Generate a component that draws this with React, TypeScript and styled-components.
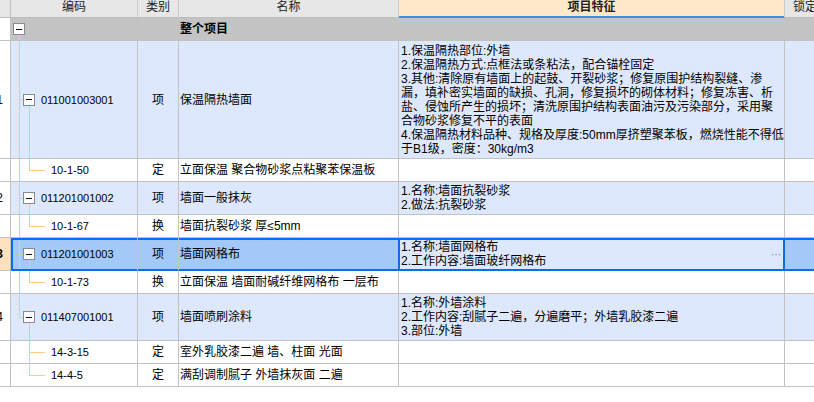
import React from 'react';
import styled, {createGlobalStyle, css} from 'styled-components';

type Tone = 'root' | 'item' | 'plain' | 'sel';
type Kind = 'root' | 'item' | 'quota';
type Rail = 'full' | 'top' | 'bottom' | 'none';

type RowData = {
  kind: Kind;
  no?: string;
  code: string;
  type: string;
  name: string;
  feature: string[];
  h: number;
  main: Rail;
  sub: Rail;
  selected?: boolean;
};

const GRID = '#c2c2c2';
const TREE = '#ffc983';
const SEL = '#0b6cf0';
const COLS = '11px 127px 41px 220px 386px 41px';

const toneBg: Record<Tone, string> = {
  root: '#c4c4c4',
  item: '#dde8fc',
  plain: '#ffffff',
  sel: '#a3c9f9',
};

const rows: RowData[] = [
  {kind: 'root', code: '', type: '', name: '整个项目', feature: [], h: 22, main: 'bottom', sub: 'none'},
  {
    kind: 'item',
    no: '1',
    code: '011001003001',
    type: '项',
    name: '保温隔热墙面',
    feature: [
      '1.保温隔热部位:外墙',
      '2.保温隔热方式:点框法或条粘法，配合锚栓固定',
      '3.其他:清除原有墙面上的起鼓、开裂砂浆；修复原围护结构裂缝、渗',
      '漏，填补密实墙面的缺损、孔洞，修复损坏的砌体材料；修复冻害、析',
      '盐、侵蚀所产生的损坏；清洗原围护结构表面油污及污染部分，采用聚',
      '合物砂浆修复不平的表面',
      '4.保温隔热材料品种、规格及厚度:50mm厚挤塑聚苯板，燃烧性能不得低',
      '于B1级，密度：30kg/m3',
    ],
    h: 117,
    main: 'full',
    sub: 'bottom',
  },
  {kind: 'quota', code: '10-1-50', type: '定', name: '立面保温 聚合物砂浆点粘聚苯保温板', feature: [], h: 22, main: 'full', sub: 'top'},
  {
    kind: 'item',
    no: '2',
    code: '011201001002',
    type: '项',
    name: '墙面一般抹灰',
    feature: ['1.名称:墙面抗裂砂浆', '2.做法:抗裂砂浆'],
    h: 32,
    main: 'full',
    sub: 'bottom',
  },
  {kind: 'quota', code: '10-1-67', type: '换', name: '墙面抗裂砂浆 厚≤5mm', feature: [], h: 22, main: 'full', sub: 'top'},
  {
    kind: 'item',
    no: '3',
    code: '011201001003',
    type: '项',
    name: '墙面网格布',
    feature: ['1.名称:墙面网格布', '2.工作内容:墙面玻纤网格布'],
    h: 32,
    main: 'full',
    sub: 'bottom',
    selected: true,
  },
  {kind: 'quota', code: '10-1-73', type: '换', name: '立面保温 墙面耐碱纤维网格布 一层布', feature: [], h: 22, main: 'full', sub: 'top'},
  {
    kind: 'item',
    no: '4',
    code: '011407001001',
    type: '项',
    name: '墙面喷刷涂料',
    feature: ['1.名称:外墙涂料', '2.工作内容:刮腻子二遍，分遍磨平；外墙乳胶漆二遍', '3.部位:外墙'],
    h: 46,
    main: 'top',
    sub: 'bottom',
  },
  {kind: 'quota', code: '14-3-15', type: '定', name: '室外乳胶漆二遍 墙、柱面 光面', feature: [], h: 22, main: 'none', sub: 'full'},
  {kind: 'quota', code: '14-4-5', type: '定', name: '满刮调制腻子 外墙抹灰面 二遍', feature: [], h: 22, main: 'none', sub: 'top'},
];

type Seg = [string, string, string, string];

const railSeg = (x: number, r: Rail): Seg | null => {
  if (r === 'full') return [`${x}px`, '0', '1px', '100%'];
  if (r === 'top') return [`${x}px`, '0', '1px', '50%'];
  if (r === 'bottom') return [`${x}px`, '100%', '1px', '50%'];
  return null;
};

// connector lines of the tree, drawn as background layers of the code cell
const treeSegs = (kind: Kind, main: Rail, sub: Rail): Seg[] => {
  const segs: (Seg | null)[] = [railSeg(8, main), railSeg(18, sub)];
  if (kind === 'item') segs.push(['8px', '50%', '4px', '1px']);
  if (kind === 'quota') segs.push(['18px', '50%', '16px', '1px']);
  return segs.filter((s): s is Seg => s !== null);
};

const GlobalStyle = createGlobalStyle`
  body {
    margin: 0;
    background: #fff;
  }
  * {
    box-sizing: border-box;
  }
`;

const Sheet = styled.div`
  width: 814px;
  height: 402px;
  overflow: hidden;
  background: #fff;
  font-family: "Liberation Sans", "Noto Sans CJK SC", sans-serif;
  font-size: 12px;
  color: #000;
`;

const HeaderRow = styled.div`
  display: grid;
  grid-template-columns: ${COLS};
  width: max-content;
  height: 18px;
`;

const HeadCell = styled.div<{$feature?: boolean}>`
  display: flex;
  justify-content: center;
  line-height: 14px;
  white-space: nowrap;
  overflow: hidden;
  color: #222;
  background: ${p => (p.$feature ? '#ffe9c8' : '#e7e7e7')};
  border-right: 1px solid #cbcbcb;
  border-bottom: 1px solid ${p => (p.$feature ? '#3b8de8' : '#bdbdbd')};
  ${p =>
    p.$feature &&
    css`
      font-weight: 700;
      box-shadow: inset 0 -1px 0 #3b8de8;
    `}
`;

const Row = styled.div<{$h: number}>`
  display: grid;
  grid-template-columns: ${COLS};
  width: max-content;
  height: ${p => p.$h + 1}px;
`;

const Cell = styled.div<{$tone: Tone}>`
  display: flex;
  align-items: center;
  min-width: 0;
  overflow: hidden;
  white-space: nowrap;
  line-height: 14px;
  background-color: ${p => toneBg[p.$tone]};
  border-right: 1px solid ${GRID};
  border-bottom: 1px solid ${p => (p.$tone === 'sel' ? SEL : GRID)};
  ${p =>
    p.$tone === 'sel' &&
    css`
      box-shadow: inset 0 2px 0 ${SEL}, inset 0 -1px 0 ${SEL};
    `}
`;

const NumCell = styled.div<{$sel?: boolean}>`
  display: flex;
  align-items: center;
  justify-content: flex-end;
  overflow: hidden;
  padding-right: 7px;
  background: ${p => (p.$sel ? '#ffe2bd' : '#fff')};
  border-right: 1px solid ${GRID};
  border-bottom: 1px solid ${GRID};
  font-weight: ${p => (p.$sel ? 700 : 400)};
  white-space: nowrap;
`;

const CornerCell = styled.div`
  background: #e7e7e7;
  border-right: 1px solid ${GRID};
  border-bottom: 1px solid #bdbdbd;
`;

const CodeCell = styled(Cell)<{$kind: Kind; $segs: Seg[]}>`
  padding-left: ${p => (p.$kind === 'root' ? 2 : p.$kind === 'item' ? 12 : 40)}px;
  background-image: ${p => p.$segs.map(() => `linear-gradient(${TREE}, ${TREE})`).join(', ')};
  background-position: ${p => p.$segs.map(s => `${s[0]} ${s[1]}`).join(', ')};
  background-size: ${p => p.$segs.map(s => `${s[2]} ${s[3]}`).join(', ')};
  background-repeat: no-repeat;
  ${p =>
    p.$tone === 'sel' &&
    css`
      box-shadow: inset 2px 0 0 ${SEL}, inset 0 2px 0 ${SEL}, inset 0 -1px 0 ${SEL};
    `}
`;

const Toggle = styled.span`
  flex: none;
  display: flex;
  align-items: center;
  justify-content: center;
  width: 12px;
  height: 12px;
  border: 1px solid #8a8a8a;
  background: #fff;

  &::before {
    content: '';
    width: 6px;
    height: 1px;
    background: #111;
  }
`;

const CodeText = styled.span<{$gap: number}>`
  margin-left: ${p => p.$gap}px;
  font-size: 11px;
`;

const TypeCell = styled(Cell)`
  justify-content: center;
`;

const NameCell = styled(Cell)<{$bold?: boolean}>`
  padding-left: 1px;
  font-weight: ${p => (p.$bold ? 700 : 400)};
  ${p =>
    p.$tone === 'sel' &&
    css`
      border-right-color: ${SEL};
    `}
`;

const FeatureCell = styled(Cell)`
  padding: 0 3px 0 2px;
  ${p =>
    p.$tone === 'sel' &&
    css`
      background-color: ${toneBg.item};
      border-right-color: ${SEL};
      box-shadow: inset 1px 0 0 ${SEL}, inset -1px 0 0 ${SEL}, inset 0 2px 0 ${SEL}, inset 0 -1px 0 ${SEL};
    `}
`;

const FeatureLines = styled.div`
  line-height: 14px;
`;

const More = styled.span`
  margin-left: auto;
  font-size: 12px;
  color: #7893c0;
  letter-spacing: -0.5px;
`;

const LockCell = styled(Cell)``;

const headers = ['编码', '类别', '名称'];

export default function App() {
  return (
    <>
      <GlobalStyle />
      <Sheet>
        <HeaderRow>
          <CornerCell />
          {headers.map(h => (
            <HeadCell key={h}>{h}</HeadCell>
          ))}
          <HeadCell $feature>项目特征</HeadCell>
          <HeadCell>锁定</HeadCell>
        </HeaderRow>
        {rows.map((r, i) => {
          const tone: Tone = r.selected ? 'sel' : r.kind === 'root' ? 'root' : r.kind === 'item' ? 'item' : 'plain';
          return (
            <Row key={i} $h={r.h}>
              <NumCell $sel={r.selected}>{r.no}</NumCell>
              <CodeCell $tone={tone} $kind={r.kind} $segs={treeSegs(r.kind, r.main, r.sub)}>
                {r.kind !== 'quota' && <Toggle />}
                {r.code && <CodeText $gap={r.kind === 'item' ? 6 : 0}>{r.code}</CodeText>}
              </CodeCell>
              <TypeCell $tone={tone}>{r.type}</TypeCell>
              <NameCell $tone={tone} $bold={r.kind === 'root'}>
                {r.name}
              </NameCell>
              <FeatureCell $tone={tone}>
                <FeatureLines>
                  {r.feature.map((line, j) => (
                    <div key={j}>{line}</div>
                  ))}
                </FeatureLines>
                {r.selected && <More>···</More>}
              </FeatureCell>
              <LockCell $tone={tone} />
            </Row>
          );
        })}
      </Sheet>
    </>
  );
}
